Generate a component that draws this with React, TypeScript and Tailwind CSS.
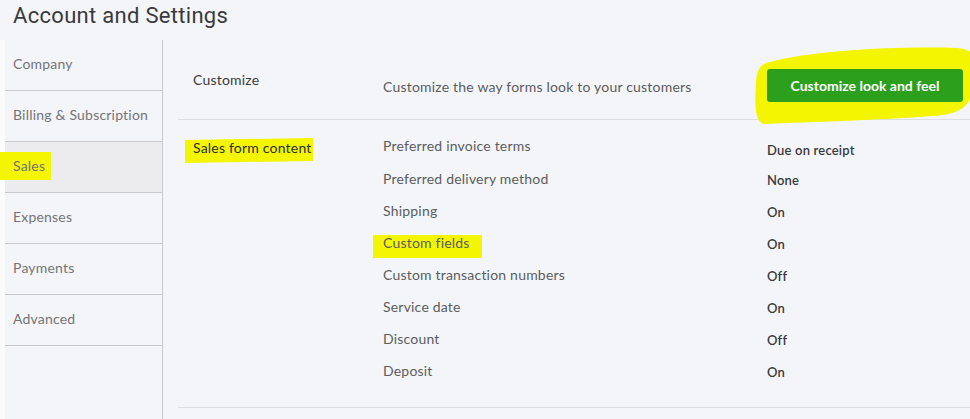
import React from "react";

const NAV = ["Company", "Billing & Subscription", "Sales", "Expenses", "Payments", "Advanced"];

const ROWS: [string, string][] = [
  ["Preferred invoice terms", "Due on receipt"],
  ["Preferred delivery method", "None"],
  ["Shipping", "On"],
  ["Custom fields", "On"],
  ["Custom transaction numbers", "Off"],
  ["Service date", "On"],
  ["Discount", "Off"],
  ["Deposit", "On"],
];

function Highlight({ children, className }: { children: React.ReactNode; className: string }) {
  // marker stroke drawn behind the label
  return (
    <span className="relative inline-block">
      <span className={`absolute bg-[#f4f500] ${className}`} />
      <span className="relative">{children}</span>
    </span>
  );
}

export default function App() {
  return (
    <div className="w-[970px] h-[419px] overflow-hidden bg-[#f4f5f8] font-['Lato','Open_Sans',sans-serif] tracking-[0.2px] text-[#393a3d]">
      <div className="h-10 pl-[13px] pt-[1px] text-[22px] leading-[30px] text-[#393a3d] font-['Roboto',sans-serif] tracking-[0.3px]">
        Account and Settings
      </div>
      <div className="flex h-[379px]">
        <div className="w-[5px] bg-[#fbfbfc]" />
        <nav className="w-[158px] border-r border-[#c9c9cc] text-[14px] text-[#737479]">
          {NAV.map((n) => (
            <div
              key={n}
              className={`h-[51px] border-b border-[#c9c9cc] pl-2 pb-[4px] flex items-center ${
                n === "Sales" ? "bg-[#ececef]" : ""
              }`}
            >
              {n === "Sales" ? (
                <Highlight className="-left-[13px] right-[-6px] top-[-3px] bottom-[-4px]">Sales</Highlight>
              ) : (
                n
              )}
            </div>
          ))}
        </nav>
        <main className="flex-1 pl-[15px]">
          <section className="h-[80px] border-b border-[#dcdde0] flex items-start">
            <div className="w-[205px] pl-[15px] pt-[29px] text-[14px]">Customize</div>
            <div className="flex-1 pt-[36px] text-[14px] text-[#5b5c61]">
              Customize the way forms look to your customers
            </div>
            <div className="relative mt-[29px] mr-[7px]">
              <svg
                className="absolute -left-[15px] -top-[27px]"
                width="232"
                height="86"
                viewBox="0 0 232 86"
              >
                <path
                  d="M18 20 C 60 8, 150 4, 205 6 C 222 7, 226 16, 222 38 C 220 60, 215 72, 180 74 C 130 78, 60 80, 12 82 C 2 80, 3 60, 4 40 C 5 28, 8 22, 18 20 Z"
                  fill="#f4f500"
                />
              </svg>
              <button className="relative w-[196px] h-[33px] rounded-[3px] bg-[#2ca01c] text-white text-[14px] font-bold tracking-normal">
                Customize look and feel
              </button>
            </div>
          </section>
          <section className="h-[288px] border-b border-[#dcdde0] flex items-start">
            <div className="w-[205px] pl-[15px] pt-[17px] text-[14px] text-[#2e2f33]">
              <Highlight className="-left-[8px] right-[-1px] top-[2px] bottom-[-4px] -skew-y-1">
                Sales form content
              </Highlight>
            </div>
            <div className="pt-[16px] w-[384px]">
              {ROWS.map(([label], i) => (
                <div
                  key={label}
                  className={`${i === 0 ? "h-[33px]" : "h-[32px]"} text-[14px] text-[#5b5c61] leading-[20px]`}
                >
                  {label === "Custom fields" ? (
                    <Highlight className="-left-[10px] right-[-12px] top-[2px] bottom-[-5px]">
                      {label}
                    </Highlight>
                  ) : (
                    label
                  )}
                </div>
              ))}
            </div>
            <div className="pt-[22px]">
              {ROWS.map(([label, value], i) => (
                <div
                  key={label}
                  className={`${i === 0 ? "h-[30px]" : "h-[32px]"} text-[13px] font-semibold text-[#393a3d] leading-[16px]`}
                >
                  {value}
                </div>
              ))}
            </div>
          </section>
        </main>
      </div>
    </div>
  );
}
